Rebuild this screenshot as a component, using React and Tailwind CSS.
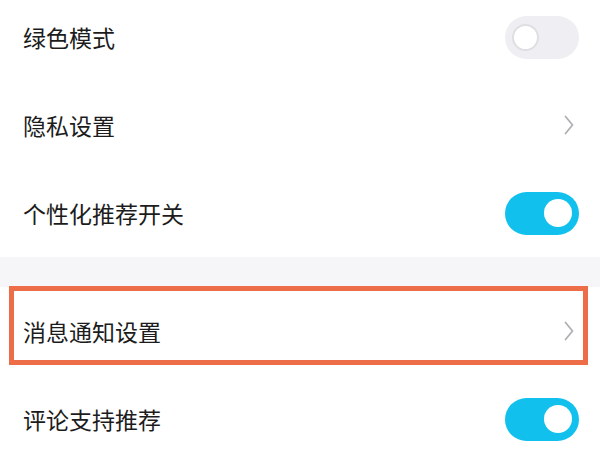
import React from "react";

const font = { fontFamily: '"Noto Sans CJK SC", "Noto Sans", sans-serif' };

function Toggle({ on }) {
  return on ? (
    <div className="w-[74px] h-[43px] rounded-full bg-[#12c0ee] flex items-center justify-end pr-[7px]">
      <div className="w-[28px] h-[28px] rounded-full bg-white" />
    </div>
  ) : (
    <div className="w-[74px] h-[43px] rounded-full bg-[#eeeef3] flex items-center justify-start pl-[7px]">
      <div className="w-[27px] h-[27px] rounded-full bg-white border-2 border-[#dedee3]" />
    </div>
  );
}

function Chevron() {
  return (
    <svg width="10" height="20" viewBox="0 0 10 20" className="mr-[2px]">
      <polyline points="1.5,1.5 8.5,10 1.5,18.5" fill="none" stroke="#b0b0b4" strokeWidth="1.8" strokeLinecap="round" strokeLinejoin="round" />
    </svg>
  );
}

function Row({ label, right, children }) {
  return (
    <div className="relative h-[88px] flex items-center justify-between pl-[23px] pr-[21px] bg-white">
      <span className="text-[23px] text-[#1c1c1c] leading-none" style={font}>{label}</span>
      <div className="flex items-center">{right}</div>
      {children}
    </div>
  );
}

export default function App() {
  return (
    <div className="w-[600px] h-[450px] overflow-hidden bg-white">
      <div className="mt-[-7px]">
        <Row label="绿色模式" right={<Toggle on={false} />} />
        <Row label="隐私设置" right={<div className="pr-[3px]"><Chevron /></div>} />
        <Row label="个性化推荐开关" right={<Toggle on />} />
        <div className="h-[30px] bg-[#f6f6f8]" />
        <Row label="消息通知设置" right={<div className="pr-[3px]"><Chevron /></div>}>
          <div className="absolute left-[9px] right-[12px] top-[-1px] h-[79px] border-[5px] border-[#ec6d47] pointer-events-none" />
        </Row>
        <Row label="评论支持推荐" right={<Toggle on />} />
      </div>
    </div>
  );
}
